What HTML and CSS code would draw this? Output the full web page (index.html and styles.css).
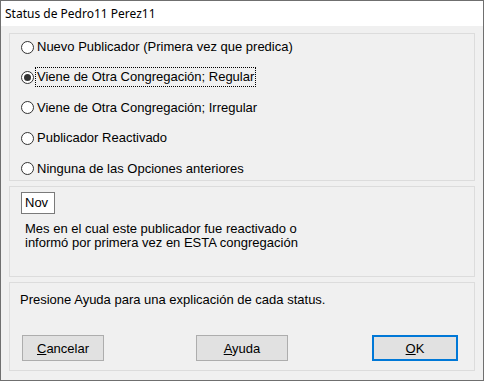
FILE: index.html
```
<!DOCTYPE html>
<html>
<head>
    <link rel="stylesheet" href="styles.css">
</head>
<body>

    <div class="window">
        <div class="title-bar">Status de Pedro11 Perez11</div>

        <div class="content">
            <div class="group status-group">
                <label class="option"><span class="radio"></span><span class="option-text">Nuevo Publicador (Primera vez que predica)</span></label>
                <label class="option"><span class="radio checked"></span><span class="option-text focused">Viene de Otra Congregación; Regular</span></label>
                <label class="option"><span class="radio"></span><span class="option-text">Viene de Otra Congregación; Irregular</span></label>
                <label class="option"><span class="radio"></span><span class="option-text">Publicador Reactivado</span></label>
                <label class="option"><span class="radio"></span><span class="option-text">Ninguna de las Opciones anteriores</span></label>
            </div>

            <div class="group month-group">
                <div class="month-box">Nov</div>
                <div class="month-note">Mes en el cual este publicador fue reactivado o<br>informó por primera vez en ESTA congregación</div>
            </div>

            <div class="group help-group">
                <div class="help-text">Presione Ayuda para una explicación de cada status.</div>
                <div class="buttons">
                    <button class="btn"><u>C</u>ancelar</button>
                    <button class="btn btn-help"><u>A</u>yuda</button>
                    <button class="btn btn-default"><u>O</u>K</button>
                </div>
            </div>
        </div>
    </div>

</body>
</html>
```

FILE: styles.css
```
body {
    margin: 0;
    font-family: 'Liberation Sans', Arial, sans-serif;
    font-size: 13px;
    color: #000;
    background-color: #f0f0f0;
}
.window {
    width: 484px;
    height: 381px;
    box-sizing: border-box;
    border: 1px solid #6f6f6f;
    background-color: #f0f0f0;
    display: flex;
    flex-direction: column;
}
.title-bar {
    height: 25px;
    background-color: #fff;
    padding-left: 4px;
    font-family: 'Noto Sans', sans-serif;
    font-size: 12px;
    line-height: 25px;
    flex-shrink: 0;
}
.content {
    flex: 1;
    padding: 7px 8px 9px 8px;
    display: flex;
    flex-direction: column;
    gap: 5px;
}
.group {
    border: 1px solid #dcdcdc;
    box-sizing: border-box;
    flex-shrink: 0;
}
.status-group {
    height: 148px;
    padding: 0 0 0 11px;
    display: flex;
    flex-direction: column;
    gap: 4.4px;
}
.option {
    height: 26px;
    flex-shrink: 0;
    display: flex;
    align-items: center;
}
.radio {
    width: 13px;
    height: 13px;
    box-sizing: border-box;
    border: 1px solid #333;
    border-radius: 50%;
    background-color: #fff;
    margin-right: 1px;
    display: flex;
    justify-content: center;
    align-items: center;
}
.radio.checked::after {
    content: '';
    width: 7px;
    height: 7px;
    border-radius: 50%;
    background-color: #333;
}
.option-text {
    padding: 1px 1px 2px 1px;
    border: 1px dotted transparent;
}
.option-text.focused {
    border-color: #000;
}
.month-group {
    height: 91px;
    padding: 5px 0 0 11px;
}
.month-box {
    width: 34px;
    height: 22px;
    box-sizing: border-box;
    border: 1px solid #7a7a7a;
    background-color: #fff;
    padding-left: 3px;
    line-height: 19px;
}
.month-note {
    margin-top: 8px;
    padding-left: 4px;
    line-height: 14px;
}
.help-group {
    flex: 1;
    padding: 10px 0 0 10px;
    display: flex;
    flex-direction: column;
}
.help-text {
    line-height: 14px;
}
.buttons {
    margin-top: 28px;
    padding-left: 2px;
    display: flex;
}
.btn {
    height: 26px;
    box-sizing: border-box;
    border: 1px solid #adadad;
    background-color: #e1e1e1;
    font-family: 'Liberation Sans', Arial, sans-serif;
    font-size: 13px;
    color: #000;
    padding: 0;
}
.btn:first-child {
    width: 82px;
}
.btn-help {
    width: 92px;
    margin-left: 92px;
}
.btn-default {
    width: 86px;
    margin-left: 84px;
    border: 2px solid #0078d7;
}
```
